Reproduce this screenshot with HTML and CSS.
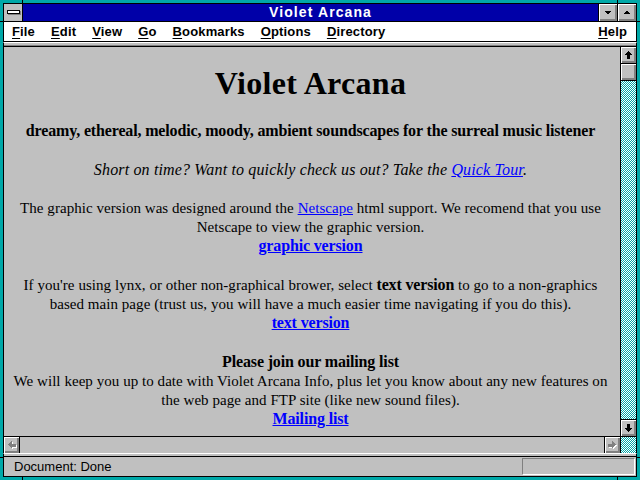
FILE: index.html
```html
<!DOCTYPE html>
<html>
<head>
<meta charset="utf-8">
<title>Violet Arcana</title>
<link rel="stylesheet" href="styles.css">
</head>
<body>
<div class="window">
  <div class="titlebar">
    <div class="sysmenu"><span class="sysbar"></span></div>
    <div class="caption">Violet Arcana</div>
    <div class="tbtn">
      <svg width="18" height="17" viewBox="0 0 18 17" shape-rendering="crispEdges"><polygon points="5,7 12,7 8.5,10.5" fill="#000"/></svg>
    </div>
    <div class="tbtn">
      <svg width="18" height="17" viewBox="0 0 18 17" shape-rendering="crispEdges"><polygon points="5,10 12,10 8.5,6.5" fill="#000"/></svg>
    </div>
  </div>
  <div class="menubar">
    <span class="mi"><u>F</u>ile</span>
    <span class="mi"><u>E</u>dit</span>
    <span class="mi"><u>V</u>iew</span>
    <span class="mi"><u>G</u>o</span>
    <span class="mi"><u>B</u>ookmarks</span>
    <span class="mi"><u>O</u>ptions</span>
    <span class="mi"><u>D</u>irectory</span>
    <span class="spacer"></span>
    <span class="mi"><u>H</u>elp</span>
  </div>
  <div class="strip"></div>
  <div class="main">
    <div class="content">
      <h1 class="title">Violet Arcana</h1>
      <p class="tag">dreamy, ethereal, melodic, moody, ambient soundscapes for the surreal music listener</p>
      <p class="tour">Short on time? Want to quickly check us out? Take the <a href="#">Quick Tour</a>.</p>
      <p>The graphic version was designed around the <a href="#">Netscape</a> html support. We recomend that you use Netscape to view the graphic version.<br><a href="#" class="strong">graphic version</a></p>
      <p>If you're using lynx, or other non-graphical brower, select <b>text version</b> to go to a non-graphics based main page (trust us, you will have a much easier time navigating if you do this).<br><a href="#" class="strong">text version</a></p>
      <p><b>Please join our mailing list</b><br>We will keep you up to date with Violet Arcana Info, plus let you know about any new features on the web page and FTP site (like new sound files).<br><a href="#" class="strong">Mailing list</a></p>
    </div>
    <div class="vscroll">
      <div class="sbtn vb">
        <svg width="15" height="16" viewBox="0 0 15 16" shape-rendering="crispEdges"><polygon points="7.5,4 3.5,8 11.5,8" fill="#000"/><rect x="6" y="8" width="3" height="4" fill="#000"/></svg>
      </div>
      <div class="thumb"></div>
      <div class="track"></div>
      <div class="sbtn vb down">
        <svg width="15" height="16" viewBox="0 0 15 16" shape-rendering="crispEdges"><polygon points="7.5,12 3.5,8 11.5,8" fill="#000"/><rect x="6" y="4" width="3" height="4" fill="#000"/></svg>
      </div>
    </div>
  </div>
  <div class="hscroll">
    <div class="sbtn hb left">
      <svg width="15" height="16" viewBox="0 0 15 16" shape-rendering="crispEdges"><polygon points="5,8.5 9,4.5 9,12.5" fill="#fff"/><rect x="9" y="7.5" width="4" height="3" fill="#fff"/><polygon points="4,7.5 8,3.5 8,11.5" fill="#808080"/><rect x="8" y="6.5" width="4" height="3" fill="#808080"/></svg>
    </div>
    <div class="htrack"></div>
    <div class="sbtn hb right">
      <svg width="15" height="16" viewBox="0 0 15 16" shape-rendering="crispEdges"><polygon points="12,8.5 8,4.5 8,12.5" fill="#fff"/><rect x="4" y="7.5" width="4" height="3" fill="#fff"/><polygon points="11,7.5 7,3.5 7,11.5" fill="#808080"/><rect x="3" y="6.5" width="4" height="3" fill="#808080"/></svg>
    </div>
    <div class="corner"></div>
  </div>
  <div class="strip2"></div>
  <div class="status">
    <span class="stext">Document: Done</span>
    <div class="sunken"></div>
  </div>
  <span class="notch nt1"></span>
  <span class="notch nt2"></span>
  <span class="notch nb1"></span>
  <span class="notch nb2"></span>
  <span class="notch nl1"></span>
  <span class="notch nl2"></span>
  <span class="notch nr1"></span>
  <span class="notch nr2"></span>
</div>
</body>
</html>
```

FILE: styles.css
```css
html, body {
  margin: 0;
  padding: 0;
  background: #00a8a8;
}
.window {
  position: relative;
  width: 640px;
  height: 480px;
  box-sizing: border-box;
  background: #00a8a8;
  padding: 3px 3px 3px 3px;
  display: flex;
  flex-direction: column;
  overflow: hidden;
}
.window > .titlebar,
.window > .menubar,
.window > .strip,
.window > .main,
.window > .hscroll,
.window > .strip2,
.window > .status {
  border-left: 1px solid #000;
  border-right: 1px solid #000;
}
.titlebar {
  display: flex;
  height: 17px;
  border-top: 1px solid #000;
  border-bottom: 1px solid #000;
  background: #0000a8;
  flex: none;
}
.sysmenu {
  width: 18px;
  height: 17px;
  background: #c0c0c0;
  border-right: 1px solid #000;
  display: flex;
  align-items: center;
  justify-content: center;
}
.sysbar {
  width: 11px;
  height: 2px;
  background: #fff;
  border: 1px solid #000;
  box-shadow: 1px 1px 0 #808080;
  margin-top: -1px;
}
.caption {
  flex: 1;
  color: #fff;
  font-family: "Liberation Sans", Arial, sans-serif;
  font-weight: bold;
  font-size: 14px;
  letter-spacing: 1.1px;
  line-height: 17px;
  text-align: center;
  padding-left: 20px;
}
.tbtn {
  width: 18px;
  height: 17px;
  border-left: 1px solid #000;
  background: #c0c0c0;
  box-shadow: inset 1px 1px 0 #fff, inset -1px -1px 0 #808080, inset -2px -2px 0 #808080;
}
.tbtn svg { display: block; }
.menubar {
  display: flex;
  height: 19px;
  background: #fff;
  border-bottom: 1px solid #000;
  font-family: "Liberation Sans", Arial, sans-serif;
  font-weight: bold;
  font-size: 13px;
  letter-spacing: 0.15px;
  line-height: 19px;
  color: #000;
  padding-right: 1px;
  flex: none;
}
.mi {
  padding: 0 8px;
}
.mi u { text-underline-offset: 2px; }
.spacer { flex: 1; }
.strip {
  height: 3px;
  background: #c0c0c0;
  border-top: 1px solid #fff;
  border-bottom: 1px solid #000;
  box-shadow: inset 0 -1px 0 #808080;
  flex: none;
}
.main {
  display: flex;
  height: 389px;
  flex: none;
}
.content {
  flex: 1;
  background: #c0c0c0;
  overflow: hidden;
  padding: 0 10px 0 7px;
  font-family: "Liberation Serif", "Times New Roman", serif;
  font-size: 15px;
  letter-spacing: 0.05px;
  line-height: 19px;
  color: #000;
  text-align: center;
}
.title {
  font-size: 32px;
  line-height: 36px;
  letter-spacing: 0.3px;
  font-weight: bold;
  margin: 18px 0 20px;
}
.content p {
  margin: 20px 0;
}
.content p.tag {
  font-weight: bold;
  font-size: 16px;
  letter-spacing: -0.15px;
}
.content p.tour {
  font-style: italic;
  font-size: 16px;
  letter-spacing: 0.15px;
}
.content b,
.content a.strong {
  font-size: 16px;
  line-height: 15px;
  letter-spacing: -0.15px;
}
.content a {
  color: #0000ff;
  text-decoration: underline;
}
.content a.strong {
  font-weight: bold;
}
.vscroll {
  width: 15px;
  border-left: 1px solid #000;
  display: flex;
  flex-direction: column;
}
.sbtn {
  background: #c0c0c0;
  box-shadow: inset 1px 1px 0 #fff, inset -1px -1px 0 #808080, inset -2px -2px 0 #808080;
  flex: none;
}
.sbtn svg { display: block; }
.vb {
  height: 16px;
  border-bottom: 1px solid #000;
}
.vb.down {
  border-bottom: none;
  border-top: 1px solid #000;
}
.thumb {
  height: 16px;
  background: #c0c0c0;
  border-bottom: 1px solid #000;
  box-shadow: inset 1px 1px 0 #fff, inset -1px -1px 0 #808080, inset -2px -2px 0 #808080;
  flex: none;
}
.track {
  flex: 1;
  background: repeating-conic-gradient(#00a8a8 0 25%, #fff 0 50%) 0 0 / 2px 2px;
}
.hscroll {
  display: flex;
  height: 16px;
  border-top: 1px solid #000;
  flex: none;
}
.hb {
  width: 15px;
  height: 16px;
}
.hb.left { border-right: 1px solid #000; }
.hb.right { border-left: 1px solid #000; }
.htrack {
  flex: 1;
  background: #c0c0c0;
}
.corner {
  width: 15px;
  border-left: 1px solid #000;
  background: repeating-conic-gradient(#00a8a8 0 25%, #fff 0 50%) 0 0 / 2px 2px;
}
.strip2 {
  height: 2px;
  background: #c0c0c0;
  border-top: 1px solid #fff;
  border-bottom: 1px solid #000;
  flex: none;
}
.status {
  display: flex;
  justify-content: space-between;
  align-items: flex-start;
  height: 19px;
  background: #c0c0c0;
  border-bottom: 1px solid #000;
  font-family: "Liberation Sans", Arial, sans-serif;
  font-size: 13px;
  line-height: 19px;
  color: #000;
  padding: 0 1px 0 10px;
  flex: none;
}
.sunken {
  width: 111px;
  height: 15px;
  margin-top: 1px;
  border-top: 1px solid #808080;
  border-left: 1px solid #808080;
  border-right: 1px solid #fff;
  border-bottom: 1px solid #fff;
}
.notch {
  position: absolute;
  background: #000;
}
.nt1 { left: 22px; top: 0; width: 1px; height: 3px; }
.nt2 { left: 617px; top: 0; width: 1px; height: 3px; }
.nb1 { left: 22px; bottom: 0; width: 1px; height: 3px; }
.nb2 { left: 617px; bottom: 0; width: 1px; height: 3px; }
.nl1 { left: 0; top: 21px; width: 3px; height: 1px; }
.nl2 { left: 0; top: 457px; width: 3px; height: 1px; }
.nr1 { right: 0; top: 21px; width: 3px; height: 1px; }
.nr2 { right: 0; top: 457px; width: 3px; height: 1px; }
```
